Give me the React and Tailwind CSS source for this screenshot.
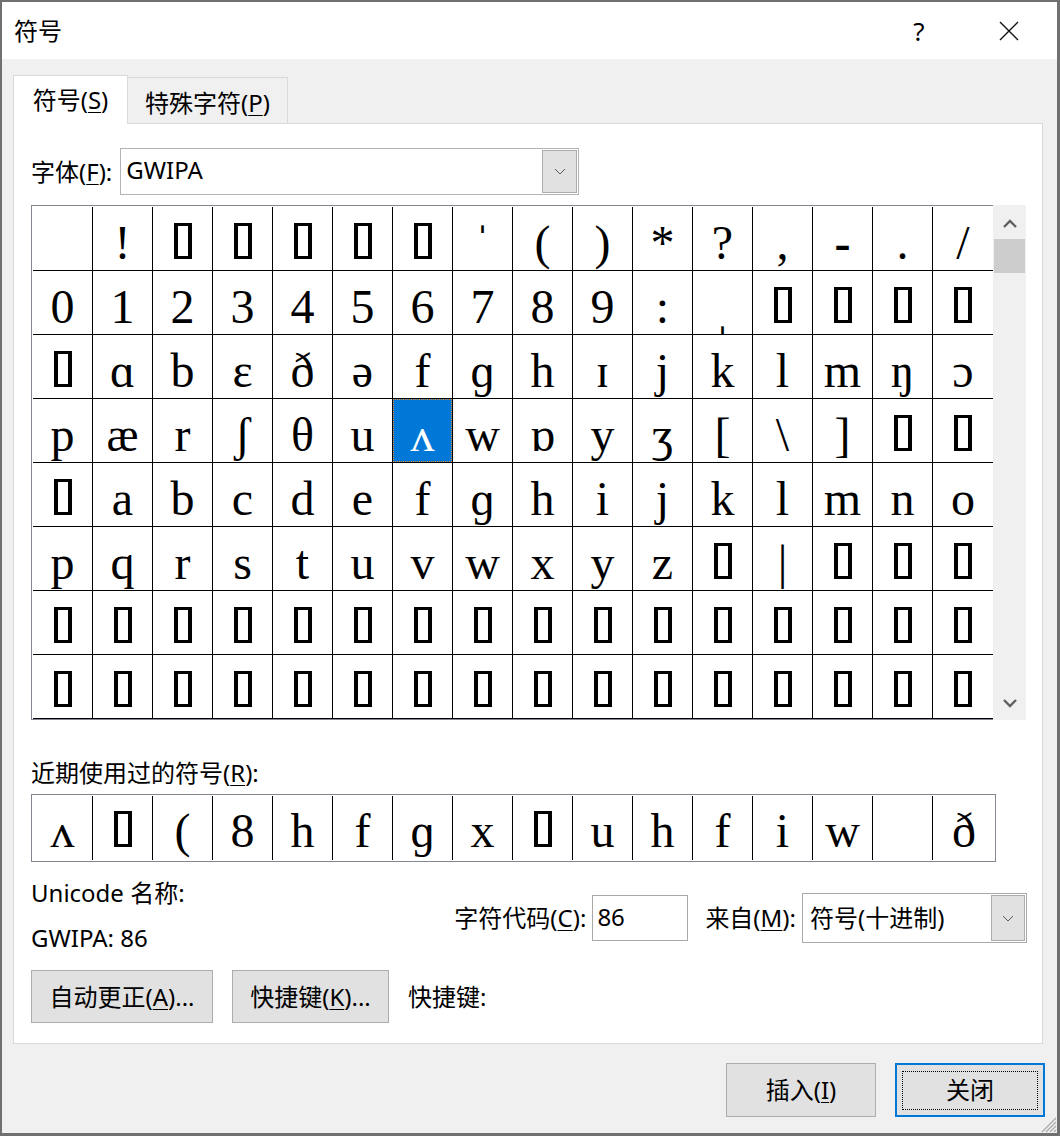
import React from 'react';

const B = null;

const rows = [
  ['', '!', B, B, B, B, B, 'ˈ', '(', ')', '*', '?', ',', '-', '.', '/'],
  ['0', '1', '2', '3', '4', '5', '6', '7', '8', '9', ':', 'ˌ', B, B, B, B],
  [B, 'ɑ', 'b', 'ɛ', 'ð', 'ə', 'f', 'ɡ', 'h', 'ɪ', 'j', 'k', 'l', 'm', 'ŋ', 'ɔ'],
  ['p', 'æ', 'r', 'ʃ', 'θ', 'u', 'ʌ', 'w', 'ɒ', 'y', 'ʒ', '[', '\\', ']', B, B],
  [B, 'a', 'b', 'c', 'd', 'e', 'f', 'ɡ', 'h', 'i', 'j', 'k', 'l', 'm', 'n', 'o'],
  ['p', 'q', 'r', 's', 't', 'u', 'v', 'w', 'x', 'y', 'z', B, '|', B, B, B],
  [B, B, B, B, B, B, B, B, B, B, B, B, B, B, B, B],
  [B, B, B, B, B, B, B, B, B, B, B, B, B, B, B, B],
];

const recent = ['ʌ', B, '(', '8', 'h', 'f', 'ɡ', 'x', B, 'u', 'h', 'f', 'i', 'w', '', 'ð'];

const heavy = ['ˈ', 'ˌ', '-'];

const serif = "font-['Liberation_Serif','DejaVu_Serif',serif]";

function Tofu({ top }) {
  return <div className={`w-[18px] h-[36px] border-x-[4px] border-y-[3px] border-black ${top}`} />;
}

function Glyph({ ch, pad, white }) {
  return (
    <span
      className={`${serif} text-[48px] leading-[48px] ${pad} ${white ? 'text-white' : 'text-black'} ${heavy.includes(ch) ? 'font-bold' : ''}`}
    >
      {ch}
    </span>
  );
}

function Chevron({ up }) {
  return (
    <svg width="14" height="9" viewBox="0 0 14 9">
      <polyline
        points={up ? '1,8 7,2 13,8' : '1,1 7,7 13,1'}
        fill="none"
        stroke="#606060"
        strokeWidth="2.4"
      />
    </svg>
  );
}

function DropArrow() {
  return (
    <svg width="12" height="7" viewBox="0 0 12 7">
      <polyline points="1,1 6,6 11,1" fill="none" stroke="#5a5a5a" strokeWidth="1" />
    </svg>
  );
}

function Key({ k }) {
  return <span className="underline underline-offset-[3px] decoration-1">{k}</span>;
}

export default function App() {
  return (
    <div className="relative w-[1060px] h-[1136px] flex flex-col bg-[#f0f0f0] border-t-2 border-l-2 border-r-[3px] border-b-[3px] border-[#707070] text-black font-['Noto_Sans','Noto_Sans_CJK_SC',sans-serif] text-[24px] overflow-hidden">
      {/* title bar */}
      <div className="h-[57px] shrink-0 bg-white flex items-center pl-[12px] pr-[25px]">
        <span className="leading-[32px]">符号</span>
        <span className="ml-auto w-[46px] text-center text-[26px] leading-[32px]">?</span>
        <span className="ml-[44px] w-[46px] flex justify-center">
          <svg width="20" height="20" viewBox="0 0 20 20">
            <path d="M1 1 L19 19 M19 1 L1 19" stroke="#111" strokeWidth="1.4" fill="none" />
          </svg>
        </span>
      </div>

      <div className="pl-[11px] pt-[16px]">
        {/* tabs */}
        <div className="flex items-end h-[48px]">
          <div className="relative z-10 -mb-px h-[49px] w-[115px] bg-white border border-b-0 border-[#d9d9d9] flex items-center justify-center leading-[32px]">
            符号(<Key k="S" />)
          </div>
          <div className="h-[46px] w-[160px] bg-[#f0f0f0] border border-l-0 border-b-0 border-[#d9d9d9] flex items-center justify-center pt-[5px] leading-[32px]">
            特殊字符(<Key k="P" />)
          </div>
        </div>

        {/* panel */}
        <div className="w-[1030px] h-[921px] bg-white border border-[#d9d9d9] pl-[17px] pr-[15px] pt-[24px] flex flex-col">
          <div className="flex items-center h-[47px]">
            <span className="leading-[32px]">字体(<Key k="F" />):</span>
            <div className="ml-[8px] w-[459px] h-[47px] border border-[#b4b4b4] p-px flex">
              <span className="flex-1 pl-[4px] leading-[40px]">GWIPA</span>
              <div className="w-[35px] h-full bg-[#e1e1e1] border border-[#adadad] flex items-center justify-center">
                <DropArrow />
              </div>
            </div>
          </div>

          {/* character grid */}
          <div className="mt-[10px] flex">
            <div className="bg-white border-l border-t border-b border-[#828790] pl-px pt-px">
              <div className="grid grid-cols-[repeat(16,60px)]">
                {rows.map((row, r) =>
                  row.map((ch, c) => {
                    const sel = r === 3 && c === 6;
                    return (
                      <div
                        key={`${r}-${c}`}
                        className={`relative h-[64px] flex justify-center border-b border-black ${c < 15 ? 'border-r' : ''} ${sel ? 'bg-[#0078d7]' : ''}`}
                      >
                        {ch === null ? <Tofu top="mt-[16px]" /> : <Glyph ch={ch} pad="pt-[12px]" white={sel} />}
                        {sel && <div className="absolute inset-0 border border-dotted border-[#e8902a]" />}
                      </div>
                    );
                  })
                )}
              </div>
            </div>
            <div className="w-[33px] bg-[#f0f0f0] flex flex-col">
              <div className="h-[34px] flex items-center justify-center pt-[2px]">
                <Chevron up />
              </div>
              <div className="h-[34px] mx-px bg-[#cdcdcd]" />
              <div className="flex-1" />
              <div className="h-[34px] flex items-center justify-center">
                <Chevron />
              </div>
            </div>
          </div>

          {/* recently used */}
          <div className="mt-[37px] leading-[32px]">近期使用过的符号(<Key k="R" />):</div>
          <div className="mt-[5px] w-[965px] h-[68px] border border-[#828790] py-px pl-px flex">
            {recent.map((ch, i) => (
              <div
                key={i}
                className={`h-[64px] flex justify-center ${i < 15 ? 'w-[60px] border-r border-black' : 'flex-1'}`}
              >
                {ch === null ? <Tofu top="mt-[15px]" /> : <Glyph ch={ch} pad="pt-[11px]" />}
              </div>
            ))}
          </div>

          {/* info + code */}
          <div className="flex justify-between">
            <div className="flex flex-col">
              <span className="mt-[15px] leading-[32px]">Unicode 名称:</span>
              <span className="mt-[13px] leading-[32px]">GWIPA: 86</span>
            </div>
            <div className="mt-[31px] h-[50px] flex items-center">
              <span className="leading-[32px]">字符代码(<Key k="C" />):</span>
              <div className="ml-[6px] w-[96px] h-[46px] border border-[#a9a9a9] pl-[4px] leading-[42px]">86</div>
              <span className="ml-[17px] leading-[32px]">来自(<Key k="M" />):</span>
              <div className="ml-[6px] w-[225px] h-[50px] border border-[#a9a9a9] p-px flex">
                <span className="flex-1 pl-[6px] leading-[46px]">符号(十进制)</span>
                <div className="w-[34px] h-full bg-[#e1e1e1] border border-[#adadad] flex items-center justify-center">
                  <DropArrow />
                </div>
              </div>
            </div>
          </div>

          <div className="mt-[16px] flex items-center">
            <button className="w-[182px] h-[53px] bg-[#e1e1e1] border border-[#adadad] leading-[32px]">
              自动更正(<Key k="A" />)...
            </button>
            <button className="ml-[19px] w-[157px] h-[53px] bg-[#e1e1e1] border border-[#adadad] leading-[32px]">
              快捷键(<Key k="K" />)...
            </button>
            <span className="ml-[19px] leading-[32px]">快捷键:</span>
          </div>
        </div>
      </div>

      {/* dialog buttons */}
      <div className="mt-[19px] pr-[12px] flex justify-end gap-[19px]">
        <button className="w-[150px] h-[54px] bg-[#e1e1e1] border border-[#adadad] leading-[32px]">
          插入(<Key k="I" />)
        </button>
        <button className="relative w-[150px] h-[54px] bg-[#e1e1e1] border-2 border-[#0078d7] leading-[32px]">
          关闭
          <span className="absolute left-[5px] right-[5px] top-[6px] bottom-[5px] border border-dotted border-black" />
        </button>
      </div>

      {/* size grip */}
      <svg className="absolute right-0 bottom-0" width="20" height="20" viewBox="0 0 20 20">
        <path d="M19 5 L5 19 M19 9 L9 19 M19 13 L13 19 M19 17 L17 19" stroke="#a8a8a8" strokeWidth="1.2" />
      </svg>
    </div>
  );
}
